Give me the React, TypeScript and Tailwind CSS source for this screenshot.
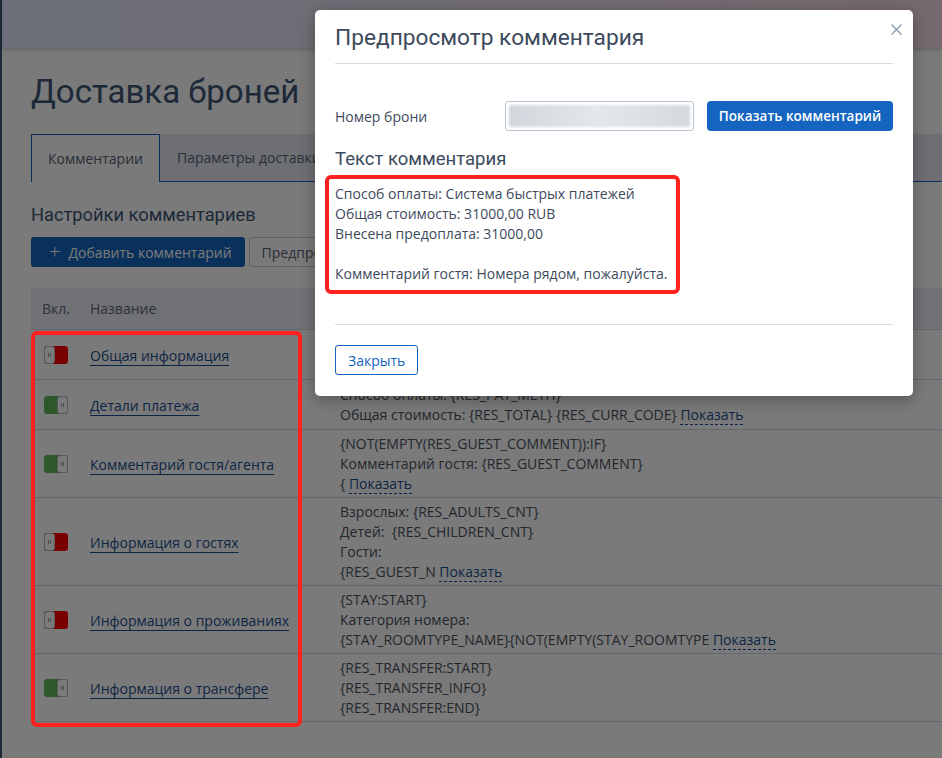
import React from 'react';

type Row = { on: boolean; name: string; lines: string[]; more?: boolean };

// first row's text lies under the modal and is not visible
const ROWS: Row[] = [
  { on: false, name: 'Общая информация', lines: [] },
  { on: true, name: 'Детали платежа', lines: ['Способ оплаты: {RES_PAY_METH}', 'Общая стоимость: {RES_TOTAL} {RES_CURR_CODE}'], more: true },
  { on: true, name: 'Комментарий гостя/агента', lines: ['{NOT(EMPTY(RES_GUEST_COMMENT)):IF}', 'Комментарий гостя: {RES_GUEST_COMMENT}', '{'], more: true },
  { on: false, name: 'Информация о гостях', lines: ['Взрослых: {RES_ADULTS_CNT}', 'Детей:  {RES_CHILDREN_CNT}', 'Гости:', '{RES_GUEST_N'], more: true },
  { on: false, name: 'Информация о проживаниях', lines: ['{STAY:START}', 'Категория номера:', '{STAY_ROOMTYPE_NAME}{NOT(EMPTY(STAY_ROOMTYPE'], more: true },
  { on: true, name: 'Информация о трансфере', lines: ['{RES_TRANSFER:START}', '{RES_TRANSFER_INFO}', '{RES_TRANSFER:END}'] },
];

const COMMENT = [
  'Способ оплаты: Система быстрых платежей',
  'Общая стоимость: 31000,00 RUB',
  'Внесена предоплата: 31000,00',
  '',
  'Комментарий гостя: Номера рядом, пожалуйста.',
];

const Knob = () => (
  <div className="w-[11px] h-full bg-white border border-[#b3bcc7] rounded-[3px] flex items-center justify-center gap-[1px]">
    <span className="w-[1px] h-[4px] bg-[#98a1ab]" />
    <span className="w-[1px] h-[4px] bg-[#98a1ab]" />
  </div>
);

const Toggle = ({ on }: { on: boolean }) => (
  <div className={`w-[24px] h-[18px] rounded-[3px] flex ${on ? 'bg-[#5cb85c]' : 'bg-[#ff0000]'}`}>
    {on ? (
      <>
        <div className="flex-1" />
        <Knob />
      </>
    ) : (
      <>
        <Knob />
        <div className="flex-1" />
      </>
    )}
  </div>
);

export default function App() {
  return (
    <div className="relative w-full h-[758px] overflow-hidden bg-white font-['Open_Sans',sans-serif] text-[14px]">
      {/* page behind the modal */}
      <div className="flex h-full">
        <div className="w-[2px] bg-[#3e5775]" />
        <div className="flex-1 flex flex-col min-w-0">
          <header className="h-[48px] shrink-0 bg-linear-to-r from-[#e1e9fc] to-[#f6dbe7] shadow-[0_2px_4px_rgba(0,0,0,0.18)]" />
          <main className="pl-[29px]">
            <h1 className="mt-[24px] font-['Roboto',sans-serif] text-[33px] leading-[40px] text-[#3e5775]">Доставка броней</h1>

            <div className="mt-[22px] h-[48px] flex bg-[#e5e9f4]">
              <div className="px-[16px] flex items-center bg-white border-t border-l border-r border-[#1565c0] text-[#586475] text-[14px]">
                Комментарии
              </div>
              <div className="flex-1 flex items-center border-b border-[#1565c0] text-[#586475] text-[14px]">
                <div className="px-[17px]">Параметры доставки</div>
              </div>
            </div>

            <h2 className="mt-[20px] font-['Roboto',sans-serif] text-[18.3px] leading-[26px] text-[#3e5775]">Настройки комментариев</h2>

            <div className="mt-[9px] flex gap-[4px]">
              <button className="h-[30px] pl-[18px] pr-[13px] flex items-center gap-[8px] rounded-[3px] bg-[#1565c0] text-white text-[14px]">
                <span className="text-[20px] leading-none font-light">+</span>
                Добавить комментарий
              </button>
              <button className="h-[30px] px-[12px] rounded-[3px] border border-[#c3ccd8] text-[#586475] text-[14px]">
                Предпросмотр комментария
              </button>
            </div>

            <div className="mt-[21px] text-[#4a5260]">
              <div className="h-[42px] flex items-center bg-[#eceef4] border-b border-[#d4d9df] text-[#5f6874]">
                <div className="w-[49px] pl-[11px]">Вкл.</div>
                <div className="w-[250px] pl-[10px]">Название</div>
                <div className="pl-[10px]">Текст</div>
              </div>
              {ROWS.map((r) => (
                <div key={r.name} className="min-h-[50px] flex items-center border-b border-[#d4d9df] pt-[4px] pb-[3px]">
                  <div className="w-[49px] pl-[13px]">
                    <Toggle on={r.on} />
                  </div>
                  <div className="w-[250px] pl-[10px]">
                    <a className="text-[#1c4f8f] underline underline-offset-[4px] decoration-[#1c4f8f]">{r.name}</a>
                  </div>
                  <div className="pl-[10px] leading-[20px] whitespace-pre">
                    {r.lines.map((l, i) => (
                      <div key={i}>
                        {l}
                        {r.more && i === r.lines.length - 1 && (
                          <>
                            {' '}
                            <span className="text-[#1c4f8f] border-b border-dashed border-[#1c4f8f]">Показать</span>
                          </>
                        )}
                      </div>
                    ))}
                  </div>
                </div>
              ))}
            </div>
          </main>
        </div>
      </div>

      {/* overlay */}
      <div className="absolute inset-0 bg-black/[0.52]" />

      {/* annotation drawn on top of the dimmed table */}
      <div className="absolute left-[31px] top-[331px] w-[271px] h-[396px] border-4 border-[#ff2020] rounded-[6px] pointer-events-none" />

      {/* modal */}
      <div className="absolute left-[315px] top-[10px] w-[598px] bg-white rounded-[5px] shadow-[0_4px_16px_rgba(0,0,0,0.3)] px-[20px] text-[#3d4a5c]">
        <button className="absolute right-[10px] top-[12px] w-[14px] h-[14px] flex items-center justify-center">
          <svg width="11" height="11" viewBox="0 0 11 11" stroke="#8a9bb0" strokeWidth="1.4" strokeLinecap="round">
            <path d="M1 1L10 10M10 1L1 10" />
          </svg>
        </button>
        <div className="pt-[13px] pb-[10px] border-b border-[#d5dce6]">
          <h3 className="font-['Roboto',sans-serif] text-[22.7px] leading-[30px]">Предпросмотр комментария</h3>
        </div>

        <div className="mt-[37px] flex items-center">
          <div className="w-[170px] text-[14px]">Номер брони</div>
          <div className="w-[189px] h-[30px] border border-[#b9c4d4] rounded-[3px] p-[3px]">
            <div className="w-full h-full rounded-[2px] bg-linear-to-r from-[#d3d7dd] via-[#e4e7eb] to-[#d5d9de] blur-[1px]" />
          </div>
          <button className="ml-[13px] w-[186px] h-[30px] rounded-[4px] bg-[#1565c0] text-white text-[13.5px] font-semibold">
            Показать комментарий
          </button>
        </div>

        <h4 className="mt-[16px] font-['Roboto',sans-serif] text-[18.5px] leading-[24px]">Текст комментария</h4>

        <div className="mt-[4px] -ml-[10px] w-[355px] border-4 border-[#ff2020] rounded-[6px] pl-[6px] pt-[5px] pb-[6px] leading-[20px]">
          {COMMENT.map((l, i) => (
            <div key={i} className="h-[20px]">{l}</div>
          ))}
        </div>

        <div className="mt-[30px] border-t border-[#d5dce6] pt-[20px] pb-[21px]">
          <button className="h-[30px] px-[12px] rounded-[3px] border border-[#1565c0] text-[#1565c0] text-[14px]">
            Закрыть
          </button>
        </div>
      </div>
    </div>
  );
}
